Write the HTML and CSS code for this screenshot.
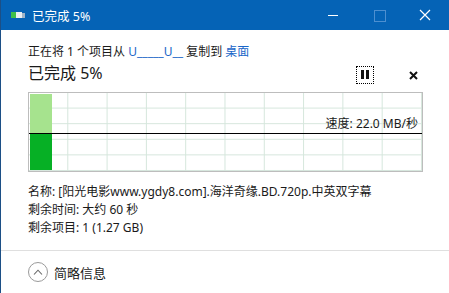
FILE: index.html
```
<!DOCTYPE html>
<html lang="zh-CN">
<head>
	<meta charset="UTF-8">
	<title>已完成 5%</title>
	<link rel="stylesheet" href="styles.css">
</head>
<body>
	<div class="window">
		<div class="titlebar">
			<svg class="app-icon" width="14" height="7" viewBox="0 0 14 7">
				<rect x="0" y="0" width="5" height="6" fill="#3fc04a"/>
				<rect x="5" y="0" width="6" height="6" fill="#e9eef3"/>
				<rect x="11" y="1" width="3" height="5" fill="#9fb4c8"/>
			</svg>
			<span class="title">已完成 5%</span>
			<div class="win-controls">
				<span class="wc wc-min"></span>
				<span class="wc wc-max"></span>
				<svg class="wc wc-close" width="12" height="12" viewBox="0 0 12 12">
					<path d="M1 1 L11 11 M11 1 L1 11" stroke="#fff" stroke-width="1.2"/>
				</svg>
			</div>
		</div>

		<div class="content">
			<p class="status">正在将 1 个项目从 <span class="link">U_____U__</span> 复制到 <span class="link">桌面</span></p>

			<div class="progress-head">
				<span class="percent">已完成 5%</span>
				<div class="actions">
					<button class="btn-pause"><i></i><i></i></button>
					<button class="btn-cancel">
						<svg width="9" height="9" viewBox="0 0 9 9">
							<path d="M1 1 L8 8 M8 1 L1 8" stroke="#111" stroke-width="2"/>
						</svg>
					</button>
				</div>
			</div>

			<div class="chart">
				<div class="bar">
					<div class="bar-top"></div>
					<div class="bar-bottom"></div>
				</div>
				<div class="speed-line"></div>
				<span class="speed">速度: 22.0 MB/秒</span>
			</div>

			<div class="details">
				<p>名称: [阳光电影www.ygdy8.com].海洋奇缘.BD.720p.中英双字幕</p>
				<p>剩余时间: 大约 60 秒</p>
				<p>剩余项目: 1 (1.27 GB)</p>
			</div>
		</div>

		<div class="footer">
			<span class="toggle">
				<svg width="10" height="6" viewBox="0 0 10 6">
					<path d="M1 5.5 L5 1.2 L9 5.5" fill="none" stroke="#666" stroke-width="1.1"/>
				</svg>
			</span>
			<span>简略信息</span>
		</div>
	</div>
</body>
</html>
```

FILE: styles.css
```
* {
	margin: 0;
	padding: 0;
	box-sizing: border-box;
}

body {
	font-family: "Noto Sans", "Noto Sans CJK SC", sans-serif;
	font-size: 12px;
	color: #1a1a1a;
	background: #fff;
	width: 449px;
	height: 293px;
	overflow: hidden;
}

.window {
	width: 449px;
	height: 293px;
	border-left: 1px solid #1c4f86;
	background: #fff;
}

/* 标题栏 */
.titlebar {
	height: 30px;
	background: #0563b6;
	color: #fff;
	display: flex;
	align-items: center;
	padding-left: 10px;
}

.app-icon {
	margin-right: 7px;
	margin-top: 1px;
}

.title {
	font-size: 12.5px;
	flex: 1;
}

.win-controls {
	display: flex;
	align-items: center;
	height: 100%;
}

.wc {
	display: block;
	width: 46px;
	height: 100%;
	position: relative;
}

.wc-min::after {
	content: "";
	position: absolute;
	left: 18px;
	top: 15px;
	width: 10px;
	height: 1px;
	background: #fff;
}

.wc-max::after {
	content: "";
	position: absolute;
	left: 18px;
	top: 10px;
	width: 10px;
	height: 10px;
	border: 1px solid #4d8fd0;
}

svg.wc-close {
	width: 12px;
	height: 12px;
	margin: 0 18px 0 17px;
}

/* 内容 */
.content {
	padding: 13px 26px 0 27px;
}

.status {
	line-height: 17px;
	height: 17px;
}

.link {
	color: #1a66c8;
}

.progress-head {
	display: flex;
	align-items: center;
	justify-content: space-between;
	height: 32px;
	padding-bottom: 6px;
}

.percent {
	font-size: 16px;
	line-height: 20px;
}

.actions {
	display: flex;
	align-items: center;
	gap: 31px;
	margin-right: 2px;
}

button {
	background: none;
	border: none;
	cursor: pointer;
	display: flex;
	align-items: center;
	justify-content: center;
}

.btn-pause {
	width: 18px;
	height: 18px;
	border: 1px dotted #000;
	gap: 2px;
	margin-top: 3px;
}

.btn-pause i {
	display: block;
	width: 3px;
	height: 9px;
	background: #111;
}

.btn-cancel {
	width: 16px;
	height: 16px;
	margin-top: 4px;
}

/* 速度图表 */
.chart {
	position: relative;
	height: 80px;
	width: 395px;
	border: 1px solid #bdbdbd;
	background-color: #fff;
	background-image:
		linear-gradient(to right, #d5e6dc 1px, transparent 1px),
		linear-gradient(to bottom, #d5e6dc 1px, transparent 1px);
	background-size: 39.3px 100%, 100% 15.6px;
	background-position: -1px 0, 0 -1px;
	padding: 1px;
}

.bar {
	width: 22px;
	height: 100%;
	display: flex;
	flex-direction: column;
}

.bar-top {
	height: 40px;
	background: #a6e38e;
}

.bar-bottom {
	flex: 1;
	background: #06b025;
}

.speed-line {
	position: absolute;
	left: 0;
	right: 0;
	top: 40px;
	height: 1px;
	background: #000;
}

.speed {
	position: absolute;
	right: 4px;
	top: 23px;
	line-height: 16px;
}

.details {
	margin-top: 11px;
	line-height: 18px;
}

/* 底部 */
.footer {
	margin-top: 13px;
	border-top: 1px solid #dfdfdf;
	height: 43px;
	display: flex;
	align-items: center;
	padding-left: 27px;
	gap: 6px;
	font-size: 13px;
}

.toggle {
	width: 20px;
	height: 20px;
	border: 1px solid #9a9a9a;
	border-radius: 50%;
	display: flex;
	align-items: center;
	justify-content: center;
}
```
